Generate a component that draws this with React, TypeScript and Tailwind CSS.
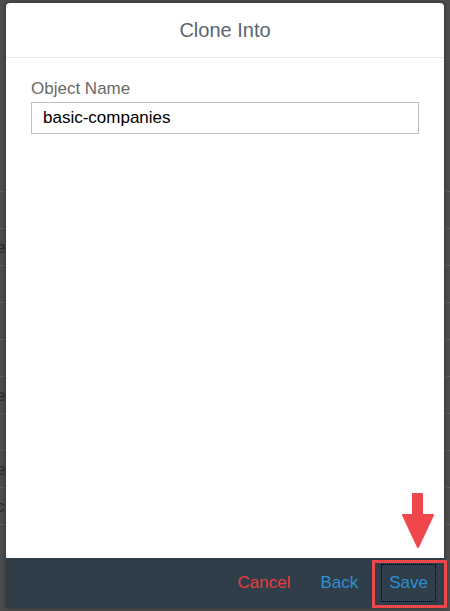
import React from "react";

const font = { fontFamily: '"Liberation Sans", Arial, sans-serif' };

const rows = ["", "e", "", "", "", "e", "", "e", "c"];

const App: React.FC = () => {
  return (
    <div className="relative w-[450px] h-[611px] overflow-hidden bg-[#4c4c4c]" style={font}>
      {/* page behind the overlay */}
      <div className="flex flex-col pt-[120px] text-[17px] text-[#2a2a2a]">
        <div className="h-[72px] border-b border-dotted border-[#626262]" />
        {rows.map((r, i) => (
          <div key={i} className="h-[37px] border-b border-dotted border-[#626262] leading-[37px]">
            <span className="-ml-[4px]">{r}</span>
          </div>
        ))}
      </div>

      {/* dialog */}
      <div className="absolute left-[6px] top-[3px] w-[438px] h-[605px] flex flex-col bg-white rounded-t-[4px] shadow-[0_0_4px_rgba(0,0,0,0.4)]">
        <div className="h-[55px] shrink-0 flex items-center justify-center border-b border-[#e6e6e6] text-[20px] text-[#5b6570]">
          Clone Into
        </div>
        <div className="flex-1 flex flex-col px-[25px] pt-[21px]">
          <label className="text-[17px] leading-[20px] text-[#6b6a68]">Object Name</label>
          <div className="mt-[3px] h-[32px] w-[388px] border border-[#bfbfbf] flex items-center px-[11px] text-[17px] text-black">
            basic-companies
          </div>
        </div>
        <div className="h-[50px] shrink-0 bg-[#2f3e48] flex items-center justify-end text-[17px]">
          <span className="text-[#ec3b40] mr-[30px]">Cancel</span>
          <span className="text-[#2d8fd5] mr-[23px]">Back</span>
          <span className="border border-dotted border-black px-[7px] py-[5px] text-[#2d8fd5] mr-[8px]">Save</span>
        </div>
      </div>

      {/* highlight box */}
      <div className="absolute left-[372px] top-[560px] w-[75px] h-[48px] border-[3px] border-[#f0474b]" />

      {/* arrow */}
      <svg className="absolute left-[400px] top-[493px]" width="36" height="56" viewBox="0 0 36 56">
        <path d="M17.5 2 L17.5 24" stroke="#f0474b" strokeWidth="11" strokeLinecap="round" />
        <path d="M3 22 L33 22 L18 54 Z" fill="#f0474b" strokeLinejoin="round" stroke="#f0474b" strokeWidth="2" />
      </svg>
    </div>
  );
};

export default App;
